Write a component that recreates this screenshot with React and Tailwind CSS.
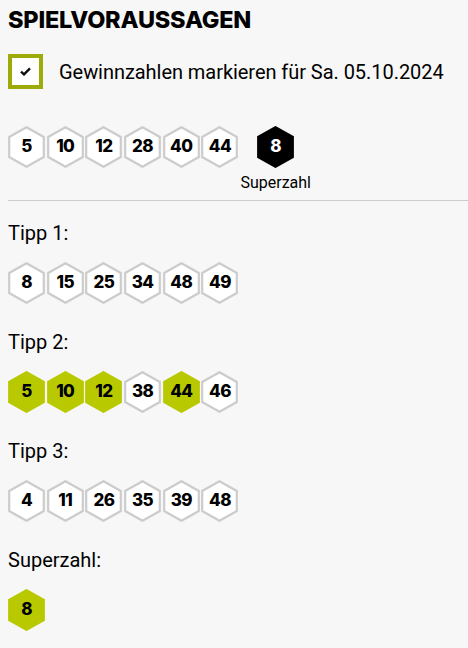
const draw = { date: "05.10.2024", numbers: [5, 10, 12, 28, 40, 44], superzahl: 8 };

const tipps = [
  { label: "Tipp 1:", numbers: [8, 15, 25, 34, 48, 49] },
  { label: "Tipp 2:", numbers: [5, 10, 12, 38, 44, 46] },
  { label: "Tipp 3:", numbers: [4, 11, 26, 35, 39, 48] },
];

const body = { fontFamily: "Roboto, 'Liberation Sans', sans-serif" };
const num = { fontFamily: "Inter, 'DejaVu Sans', sans-serif" };

function Hex({ n, variant = "plain" }) {
  const fill = variant === "hit" ? "#b9c900" : variant === "dark" ? "#000000" : "#ffffff";
  const stroke = variant === "hit" ? "#b9c900" : variant === "dark" ? "#000000" : "#cccccc";
  return (
    <div className="relative w-[37px] h-[42px] flex items-center justify-center">
      <svg className="absolute inset-0" width="37" height="42" viewBox="0 0 37 42">
        <polygon
          points="18.5,1.2 35.8,11 35.8,31 18.5,40.8 1.2,31 1.2,11"
          fill={fill}
          stroke={stroke}
          strokeWidth="2.2"
        />
      </svg>
      <span
        className={`relative text-[17px] font-extrabold tracking-[-0.6px] ${variant === "dark" ? "text-white" : "text-black"}`}
        style={num}
      >
        {n}
      </span>
    </div>
  );
}

function HexRow({ numbers, hits = [] }) {
  return (
    <div className="flex gap-[1.7px]">
      {numbers.map((n, i) => (
        <Hex key={i} n={n} variant={hits.includes(n) ? "hit" : "plain"} />
      ))}
    </div>
  );
}

export default function App() {
  return (
    <div className="min-h-screen w-[468px] bg-[#f7f7f7] text-black pl-[8px] pt-[7px]">
      <h1 className="text-[23.5px] leading-[26px] font-extrabold tracking-[-0.2px]" style={num}>
        SPIELVORAUSSAGEN
      </h1>

      <div className="flex items-center mt-[21px]">
        <div className="w-[35px] h-[35px] border-[4px] border-[#9cab0a] bg-white flex items-center justify-center">
          <svg width="11" height="9" viewBox="0 0 11 9">
            <path d="M1 4.6 L4 7.4 L10 1.4" fill="none" stroke="#111" strokeWidth="2.4" />
          </svg>
        </div>
        <span className="ml-[16px] text-[20px] tracking-[-0.05px]" style={body}>
          Gewinnzahlen markieren für Sa. {draw.date}
        </span>
      </div>

      <div className="flex mt-[37px]">
        <HexRow numbers={draw.numbers} />
        <div className="ml-[2px] flex flex-col items-center">
          <Hex n={draw.superzahl} variant="dark" />
          <span className="mt-[5px] text-[16px] leading-[20px]" style={body}>
            Superzahl
          </span>
        </div>
      </div>

      <div className="mt-[7px] border-t border-[#cccccc]" />

      <div className="flex flex-col gap-[26px] mt-[20px]" style={body}>
        {tipps.map((t) => (
          <div key={t.label}>
            <div className="text-[20px] leading-[24px] mb-[17px]">{t.label}</div>
            <HexRow numbers={t.numbers} hits={draw.numbers} />
          </div>
        ))}
        <div>
          <div className="text-[20px] leading-[24px] mb-[17px]">Superzahl:</div>
          <Hex n={draw.superzahl} variant="hit" />
        </div>
      </div>
    </div>
  );
}
